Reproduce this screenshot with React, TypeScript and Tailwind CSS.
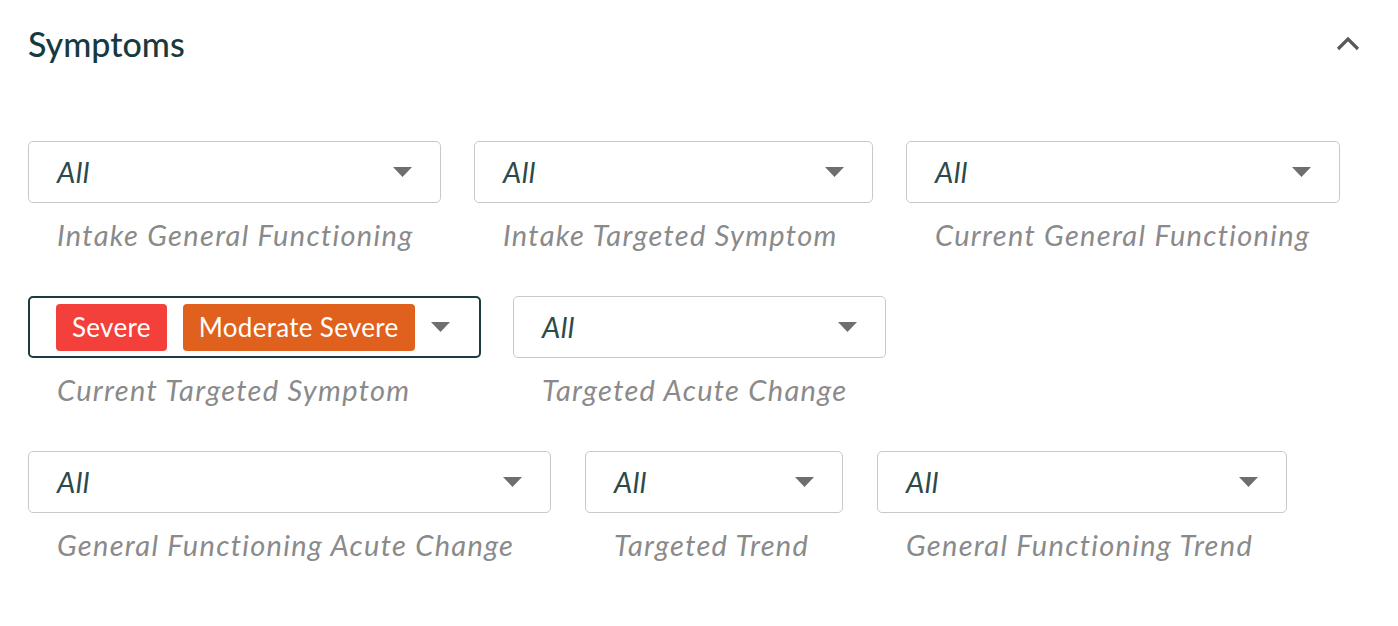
const font = { fontFamily: "Lato, 'Open Sans', sans-serif" };

function Caret() {
  return (
    <svg width="19" height="10" viewBox="0 0 19 10" className="shrink-0">
      <path d="M0 0 L19 0 L9.5 10 Z" fill="#6e6e6e" />
    </svg>
  );
}

function Select({
  label,
  width,
  tags,
  focused,
}: {
  label: string;
  width: string;
  tags?: { text: string; color: string }[];
  focused?: boolean;
}) {
  return (
    <div className={`flex flex-col ${width}`}>
      <div
        className={
          focused
            ? "flex h-[62px] items-center justify-between gap-4 rounded-[5px] border-2 border-[#1d3a43] pl-[26px] pr-[29px]"
            : "flex h-[62px] items-center justify-between gap-6 rounded-[5px] border border-[#c9c9c9] pl-[28px] pr-[28px]"
        }
      >
        {tags ? (
          <div className="flex items-center gap-4">
            {tags.map((t) => (
              <span
                key={t.text}
                className="flex h-[47px] items-center rounded-[4px] px-[16px] text-[26px] tracking-[0.3px] text-white"
                style={{ backgroundColor: t.color }}
              >
                {t.text}
              </span>
            ))}
          </div>
        ) : (
          <span className="text-[29px] italic tracking-[0.5px] text-[#2b4a4c]">All</span>
        )}
        <Caret />
      </div>
      <div className="whitespace-nowrap px-[29px] pt-[14px] text-[29px] italic leading-[36px] tracking-[1.3px] text-[#8a8a8a]">
        {label}
      </div>
    </div>
  );
}

export default function App() {
  return (
    <div className="h-[626px] w-[1398px] bg-white" style={font}>
      <div className="flex items-center justify-between pl-[28px] pr-[38px] pt-[22px]">
        <h2 className="text-[34px] font-medium leading-[44px] text-[#173a3f]">Symptoms</h2>
        <svg width="24" height="14" viewBox="0 0 24 14">
          <path d="M2 12 L12 2 L22 12" fill="none" stroke="#5a5a5a" strokeWidth="3.2" />
        </svg>
      </div>

      <div className="flex flex-col gap-[43px] pl-[28px] pt-[75px]">
        <div className="flex gap-[33px]">
          <Select width="w-[413px]" label="Intake General Functioning" />
          <Select width="w-[399px]" label="Intake Targeted Symptom" />
          <Select width="w-[434px]" label="Current General Functioning" />
        </div>
        <div className="flex gap-[32px]">
          <Select
            width="w-[453px]"
            label="Current Targeted Symptom"
            focused
            tags={[
              { text: "Severe", color: "#f4403a" },
              { text: "Moderate Severe", color: "#e0611d" },
            ]}
          />
          <Select width="w-[373px]" label="Targeted Acute Change" />
        </div>
        <div className="flex gap-[34px]">
          <Select width="w-[523px]" label="General Functioning Acute Change" />
          <Select width="w-[258px]" label="Targeted Trend" />
          <Select width="w-[410px]" label="General Functioning Trend" />
        </div>
      </div>
    </div>
  );
}
